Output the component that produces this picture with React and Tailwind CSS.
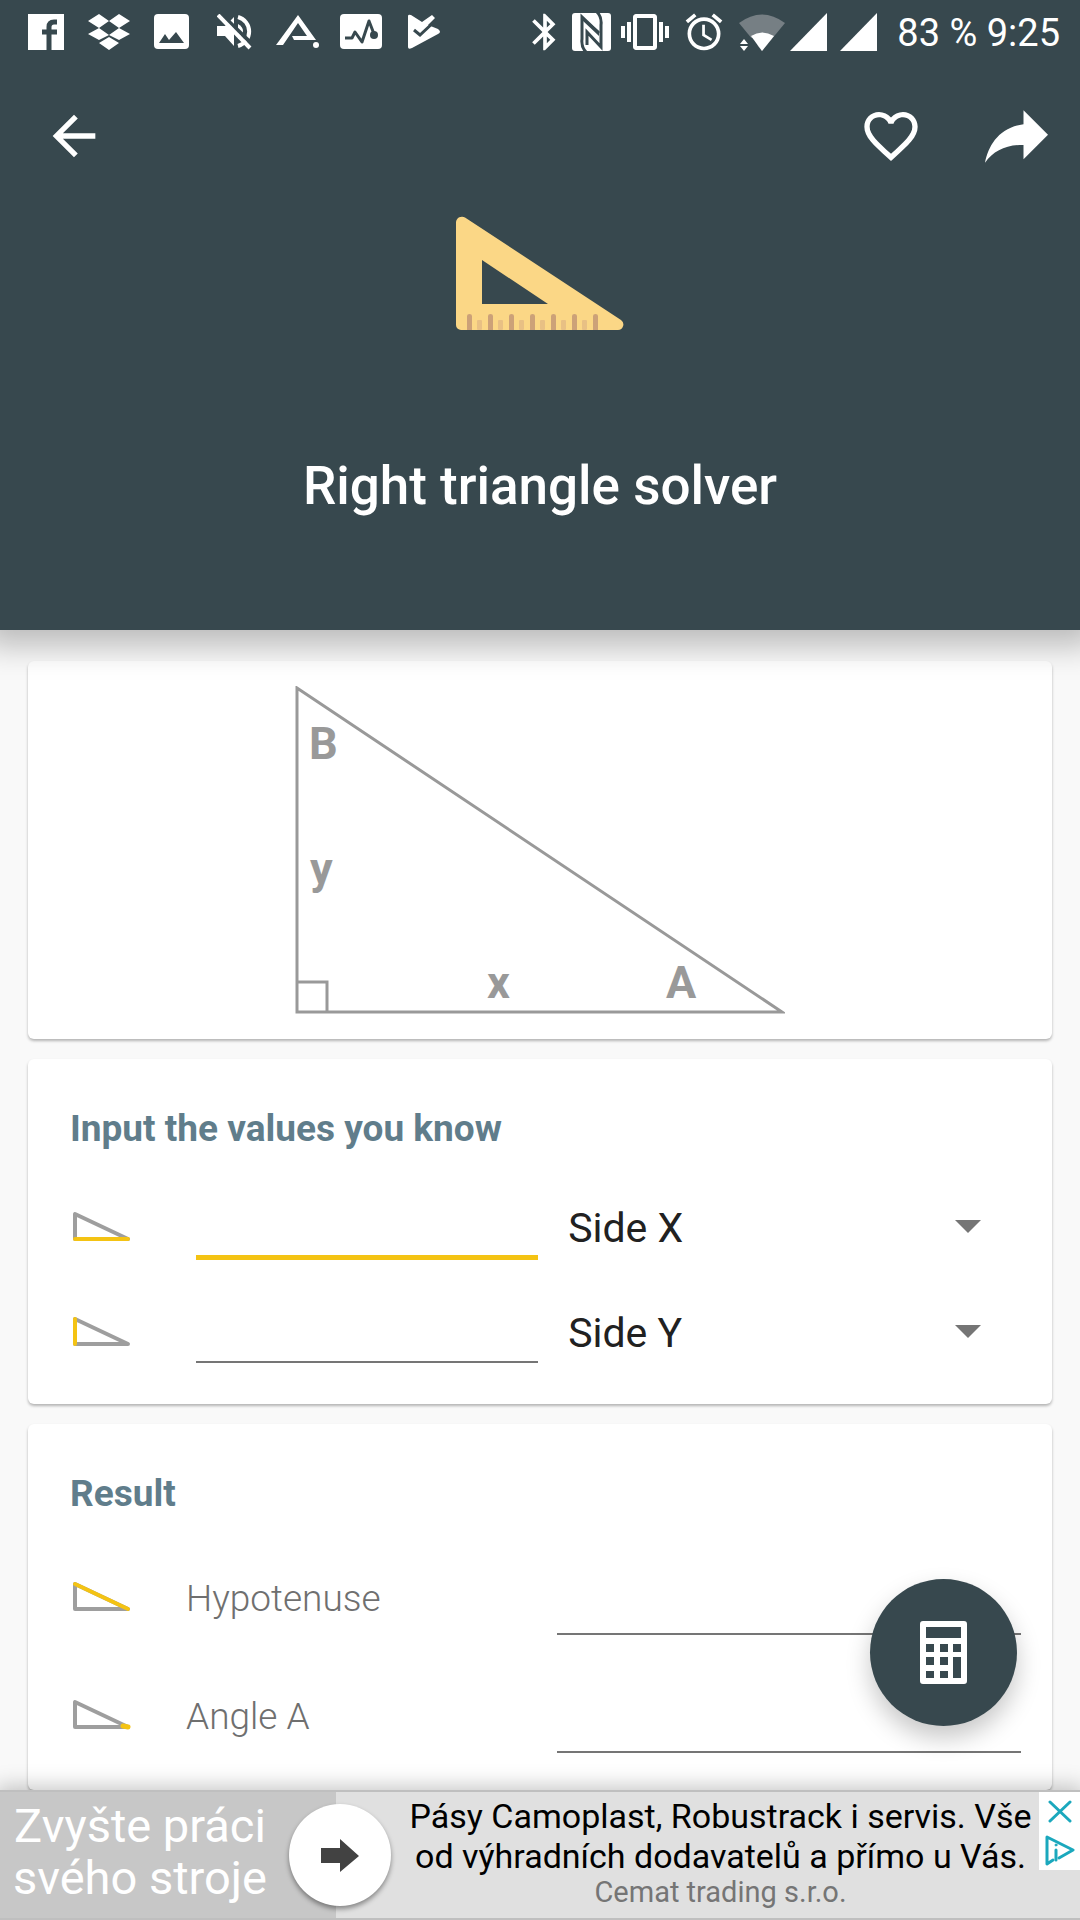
import React, { useState } from 'react';
import { MdAlarm, MdArrowBack, MdBluetooth, MdFavoriteBorder, MdVibration } from 'react-icons/md';

const SIDES = ['Side X', 'Side Y', 'Hypotenuse', 'Angle A', 'Angle B'];

// Which part of the small triangle gets the accent colour
const HIGHLIGHTS = {
    'Side X': 'M5 27H58',
    'Side Y': 'M5 2V27',
    'Hypotenuse': 'M5 2L58 27',
    'Angle A': 'M53 26L58 27',
    'Angle B': 'M5 2V5',
};

function TriangleIcon({ part }) {
    return (
        <svg className="w-[60px] h-[30px] shrink-0 overflow-visible" viewBox="0 0 60 30" fill="none" strokeLinecap="round" strokeLinejoin="round" strokeWidth="4">
            <path d="M5 2V27H58Z" stroke="#9e9e9e" />
            <path d={HIGHLIGHTS[part]} stroke="#f4c313" strokeWidth={part.startsWith('Angle') ? 5 : 4} />
        </svg>
    );
}

function NotificationIcons() {
    return (
        <div className="flex items-center">
            {/* Facebook */}
            <div className="w-[63px] flex justify-center">
                <svg className="w-9 h-9" viewBox="0 0 36 36">
                    <path d="M0 0H36V36H0Z" fill="#fff" />
                    <path d="M21 36V13Q21 8 26 8H29M14 18H29" fill="none" stroke="#37484e" strokeWidth="5" />
                </svg>
            </div>
            {/* Dropbox */}
            <div className="w-[63px] flex justify-center">
                <svg className="w-[42px] h-9" viewBox="0 0 42 36" fill="#fff">
                    <path d="M11 0L21 7L11 14L0 7ZM31 0L42 7L31 14L21 7ZM11 14L21 21L11 26L0 20ZM31 14L42 20L31 26L21 21ZM21 23L31 29L21 36L11 29Z" />
                </svg>
            </div>
            {/* Gallery */}
            <div className="w-[63px] flex justify-center">
                <svg className="w-[35px] h-9" viewBox="0 0 35 36">
                    <rect width="35" height="35" rx="4" fill="#fff" />
                    <path d="M5 29L11 20L15 26L22 18L30 29Z" fill="#37484e" />
                </svg>
            </div>
            {/* Muted */}
            <div className="w-[63px] flex justify-center">
                <svg className="w-9 h-9" viewBox="0 0 36 36">
                    <path d="M0 12H8L17 3V32L8 22H0Z" fill="#fff" />
                    <path d="M21 3A15 15 0 0 1 21 32" fill="none" stroke="#fff" strokeWidth="4" />
                    <path d="M21 10Q26 13 26 17Q26 22 21 25Z" fill="#fff" />
                    <path d="M4 0L36 31" stroke="#37484e" strokeWidth="4" />
                    <path d="M1 1L33 34" stroke="#fff" strokeWidth="4" />
                </svg>
            </div>
            {/* Letter mark with dot */}
            <div className="w-[63px] flex justify-center">
                <svg className="w-[44px] h-9" viewBox="0 0 44 36">
                    <path d="M0 31L3 27L22 1L40 26H18L16 22H31L22 9L7 31Z" fill="#fff" />
                    <circle cx="40" cy="31" r="3" fill="#fff" />
                </svg>
            </div>
            {/* Activity */}
            <div className="w-[63px] flex justify-center">
                <svg className="w-[42px] h-9" viewBox="0 0 42 36">
                    <rect width="42" height="35" rx="4" fill="#fff" />
                    <path d="M5 24H12L15 18L22 28L29 7L34 20" fill="none" stroke="#37484e" strokeWidth="3" strokeLinejoin="round" />
                    <circle cx="34" cy="21" r="4" fill="#37484e" />
                </svg>
            </div>
            {/* Play update */}
            <div className="w-[63px] flex justify-center">
                <svg className="w-8 h-9" viewBox="0 0 32 36">
                    <path d="M0 2Q0 0 3 1L14 8L24 1L27 4L20 11L30 15Q34 18 30 20L4 34Q0 36 0 33Z" fill="#fff" />
                    <path d="M6 16L12 21L27 7" fill="none" stroke="#37484e" strokeWidth="3" />
                </svg>
            </div>
        </div>
    );
}

function SystemIcons() {
    return (
        <div className="flex items-center gap-[10px] text-white">
            <MdBluetooth className="w-[34px] h-[44px]" viewBox="3 0 18 24" />
            {/* NFC */}
            <svg className="w-[39px] h-[38px]" viewBox="0 0 39 38">
                <rect width="39" height="38" rx="3" fill="#fff" />
                <path d="M14 39Q9 34 10 26V4L27 20" fill="none" stroke="#37484e" strokeWidth="3" />
                <path d="M25 -1Q30 4 29 12V34L15 19V32" fill="none" stroke="#37484e" strokeWidth="3" />
                <path d="M10 4L27 18V23L10 7Z" fill="#37484e" />
            </svg>
            <MdVibration className="w-12 h-12" />
            <MdAlarm className="w-[50px] h-[44px]" />
            <div className="flex items-center gap-[5px]">
                {/* Wi-Fi, one bar */}
                <svg className="w-[46px] h-[37px]" viewBox="0 0 46 37">
                    <path d="M0 9Q23 -8 46 9L23 37Z" fill="#767f84" />
                    <path d="M9 24L16 24L20 37H9Z" fill="#37484e" />
                    <path d="M12 22Q23 15 35 22L23 37Z" fill="#fff" />
                    <path d="M1 30L5 25L9 30ZM1 32H9L5 37Z" fill="#fff" />
                </svg>
                <svg className="w-[37px] h-[38px]" viewBox="0 0 37 38">
                    <path d="M37 0V38H0Z" fill="#fff" />
                </svg>
            </div>
            <svg className="w-10 h-[38px]" viewBox="0 0 40 38">
                <path d="M40 0V38H3Z" fill="#fff" />
            </svg>
            <span className="pl-[10px] pt-[2px] text-[38px] leading-none">83 % 9:25</span>
        </div>
    );
}

function SetSquare() {
    return (
        <svg className="w-[168px] h-[114px]" viewBox="0 0 168 114">
            <path d="M0 6A6 6 0 0 1 9 1.500L165 104A5.500 5.500 0 0 1 162 114H5A5 5 0 0 1 0 109ZM26 44V88H92Z" fill="#fbd786" fillRule="evenodd" />
            {[0, 1, 2, 3, 4, 5, 6].map((i) => (
                <path key={i} d={`M${11 + i * 21} 114V100Q${11 + i * 21} 98 ${13.5 + i * 21} 98T${16 + i * 21} 100V114Z`} fill="#cca178" />
            ))}
            {[0, 1, 2, 3, 4, 5].map((i) => (
                <rect key={i} x={21 + i * 21} y="104" width="5" height="10" rx="1" fill="#e8c084" />
            ))}
        </svg>
    );
}

function Diagram() {
    return (
        <svg className="w-[490px] h-[328px]" viewBox="0 0 490 328">
            <path d="M2 2V326H487ZM2 296H32V326" fill="none" stroke="#999" strokeWidth="3" />
            <g fill="#999" fontSize="45" fontWeight="700">
                <text x="14" y="73">B</text>
                <text x="15" y="198">y</text>
                <text x="192" y="312">x</text>
                <text x="371" y="312">A</text>
            </g>
        </svg>
    );
}

function Card({ className = '', children }) {
    return (
        <section className={`bg-white rounded-md shadow-[0_2px_3px_rgba(0,0,0,0.28)] ${className}`}>
            {children}
        </section>
    );
}

function InputRow({ id, initial, active, onActivate }) {
    const [side, setSide] = useState(initial);
    const [value, setValue] = useState('');

    return (
        <div className="h-[105px] flex items-center">
            <TriangleIcon part={side} />
            <div className="ml-[66px] mr-[30px] flex-[7] min-w-0 h-[66px]">
                <input
                    id={id}
                    aria-label={side}
                    inputMode="decimal"
                    value={value}
                    onChange={(e) => setValue(e.target.value)}
                    onFocus={onActivate}
                    className={`block w-full bg-transparent px-1 text-[41px] outline-none ${active ? 'h-[66px] border-b-5 border-[#f4c313]' : 'h-[64px] border-b-2 border-[#757575]'}`}
                />
            </div>
            <div className="relative flex-[9] min-w-0">
                <select
                    aria-label={`Known value for ${id}`}
                    value={side}
                    onChange={(e) => setSide(e.target.value)}
                    className="block w-full pt-[2px] appearance-none bg-transparent text-[41px] leading-[52px] text-[#212121] outline-none"
                >
                    {SIDES.map((name) => (
                        <option key={name}>{name}</option>
                    ))}
                </select>
                <svg className="absolute right-[27px] top-5 w-[26px] h-[13px] pointer-events-none" viewBox="0 0 26 13">
                    <path d="M0 0H26L13 13Z" fill="#757575" />
                </svg>
            </div>
        </div>
    );
}

function ResultRow({ id, name }) {
    return (
        <div className="h-[118px] flex items-center">
            <TriangleIcon part={name} />
            <label htmlFor={id} className="ml-14 pt-1 flex-[4] text-[37px] leading-[44px] font-light text-[#6f6f6f]">{name}</label>
            <input id={id} readOnly className="flex-[5] min-w-0 h-[76px] text-[37px] bg-transparent outline-none border-b-2 border-[#757575]" />
        </div>
    );
}

function AdBanner() {
    return (
        <footer className="relative z-20 h-[130px] shrink-0 flex border-y-2 border-[#bfbfbf] bg-[#e0e0e0] shadow-[0_0_20px_4px_rgba(0,0,0,0.22)]">
            <a href="#ad" className="flex-1 flex min-w-0">
                <div className="relative w-[336px] shrink-0 pt-2 pr-14 bg-[#c7c7c7] text-white text-[47px] leading-[52px] text-center whitespace-nowrap">
                    <div>Zvyšte práci</div>
                    <div>svého stroje</div>
                    <span className="absolute -right-[55px] top-3 size-[102px] rounded-full bg-white flex items-center justify-center shadow-[0_3px_5px_rgba(0,0,0,0.4)]">
                        <svg className="w-[38px] h-[33px]" viewBox="0 0 38 33">
                            <path d="M0 9H19V0L38 17L19 33V24H0Z" fill="#424242" />
                        </svg>
                    </span>
                </div>
                <div className="flex-1 pl-[66px] pt-1 text-center whitespace-nowrap text-black text-[34px] leading-[40px]">
                    <div>Pásy Camoplast, Robustrack i servis. Vše</div>
                    <div>od výhradních dodavatelů a přímo u Vás.</div>
                    <div className="text-[29px] leading-[32px] text-[#757575]">Cemat trading s.r.o.</div>
                </div>
            </a>
            <div className="w-[41px] h-[78px] shrink-0 bg-white flex flex-col items-center justify-between pt-2 pb-1">
                <button aria-label="Close ad">
                    <svg className="block w-[24px] h-[23px]" viewBox="0 0 24 23">
                        <path d="M2 2L22 21M22 2L2 21" stroke="#1ba8bd" strokeWidth="3" strokeLinecap="round" />
                    </svg>
                </button>
                <button aria-label="Ad choices">
                    <svg className="block w-[30px] h-[31px]" viewBox="0 0 30 31" fill="none" stroke="#1ba8bd" strokeWidth="3" strokeLinejoin="round" strokeLinecap="round">
                        <path d="M8 25L2 29V2L28 15L14 23" />
                        <path d="M11 15V25" />
                        <circle cx="11" cy="10" r="1" strokeWidth="1" fill="#1ba8bd" />
                    </svg>
                </button>
            </div>
        </footer>
    );
}

export default function App() {
    const [active, setActive] = useState('first');

    return (
        <div className="relative h-screen flex flex-col overflow-hidden bg-[#f9f9f9] font-[Roboto,sans-serif]">
            <header className="relative z-10 shrink-0 bg-[#37484e] text-white shadow-[0_0_30px_16px_rgba(0,0,0,0.25)]">
                <div className="h-16 pl-[14px] pr-5 flex items-center justify-between">
                    <NotificationIcons />
                    <SystemIcons />
                </div>
                <nav className="h-36 pl-[42px] pr-8 flex items-center">
                    <button aria-label="Back">
                        <MdArrowBack className="size-16" />
                    </button>
                    <button aria-label="Favourite" className="ml-auto mr-[62px]">
                        <MdFavoriteBorder className="size-16" />
                    </button>
                    <button aria-label="Share">
                        <svg className="w-[63px] h-[53px]" viewBox="3 5 18 15" fill="currentColor">
                            <path d="M21 12L14 5V9C7 10 4 15 3 20C5.500 16.500 9 14.900 14 14.900V19L21 12Z" />
                        </svg>
                    </button>
                </nav>
                <div className="pt-2 pb-[114px] flex flex-col items-center gap-[126px]">
                    <SetSquare />
                    <h1 className="text-[53px] leading-[60px] font-medium">Right triangle solver</h1>
                </div>
            </header>

            <main className="flex-1 min-h-0 px-7 pt-[31px] flex flex-col gap-5">
                <Card className="py-[25px] flex justify-center">
                    <Diagram />
                </Card>

                <Card className="pl-[42px] pr-11 pt-12 pb-5">
                    <h2 className="mb-[23px] text-[37px] leading-[44px] font-bold text-[#607d8b]">Input the values you know</h2>
                    <InputRow id="first" initial="Side X" active={active === 'first'} onActivate={() => setActive('first')} />
                    <InputRow id="second" initial="Side Y" active={active === 'second'} onActivate={() => setActive('second')} />
                </Card>

                <Card className="flex-1 pl-[42px] pr-[31px] pt-12">
                    <h2 className="mb-[22px] text-[37px] leading-[44px] font-bold text-[#607d8b]">Result</h2>
                    <ResultRow id="hypotenuse" name="Hypotenuse" />
                    <ResultRow id="angle-a" name="Angle A" />
                </Card>
            </main>

            <button
                aria-label="Calculate"
                className="absolute z-10 right-[63px] bottom-[194px] size-[147px] rounded-full bg-[#37484e] flex items-center justify-center shadow-[0_12px_24px_rgba(0,0,0,0.22)]"
            >
                <svg className="w-[47px] h-[63px]" viewBox="0 0 47 63">
                    <path
                        fill="#fff"
                        fillRule="evenodd"
                        d="M3 0H44Q47 0 47 3V60Q47 63 44 63H3Q0 63 0 60V3Q0 0 3 0ZM6 6V17H41V6ZM6 23V31H14V23ZM20 23V31H28V23ZM33 23V31H41V23ZM6 36V44H14V36ZM20 36V44H28V36ZM6 50V57H14V50ZM20 50V57H28V50ZM33 36V57H41V36Z"
                    />
                </svg>
            </button>

            <AdBanner />
        </div>
    );
}
